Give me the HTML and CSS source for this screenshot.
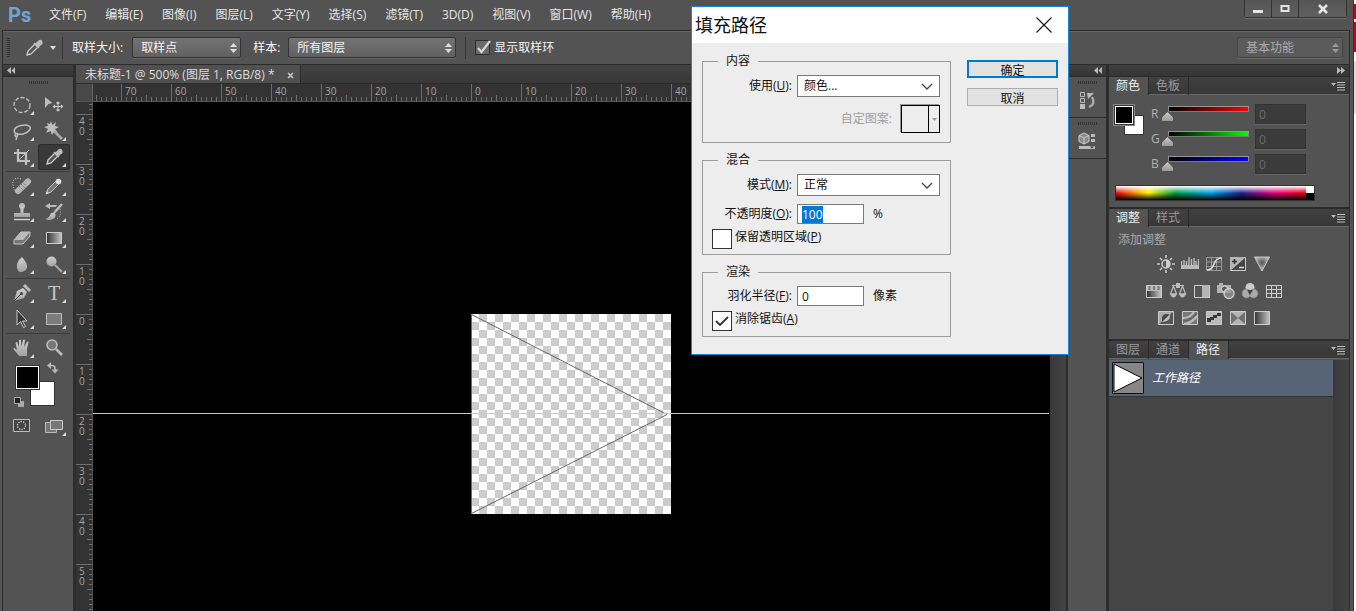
FILE: index.html
```html
<!DOCTYPE html>
<html lang="zh-CN">
<head>
<meta charset="utf-8">
<title>未标题-1</title>
<link rel="stylesheet" href="styles.css">
</head>
<body>
<svg class="defs" aria-hidden="true">
  <defs>
    <linearGradient id="metal" x1="0" y1="0" x2="0" y2="1"><stop offset="0" stop-color="#cfcfcf"/><stop offset="1" stop-color="#a2a2a2"/></linearGradient>
    <linearGradient id="fade" x1="0" y1="0" x2="1" y2="0"><stop offset="0" stop-color="#333"/><stop offset="1" stop-color="#c4c4c4"/></linearGradient>
    <radialGradient id="glow" cx=".5" cy=".4" r=".5"><stop offset="0" stop-color="#555"/><stop offset="1" stop-color="#bbb"/></radialGradient>
    <symbol id="updown" viewBox="0 0 7 10"><path d="M3.500 0L7 4H0zM0 6h7L3.500 10z" fill="currentColor"/></symbol>
    <symbol id="chevron" viewBox="0 0 12 7"><path d="M1 1l5 5 5-5" fill="none" stroke="#444" stroke-width="1.300"/></symbol>
    <symbol id="flyout" viewBox="0 0 14 9"><path d="M0 1h5L2.500 4z" fill="#bbb"/><path d="M6 .5h8M6 3h8M6 5.500h8M6 8h8" stroke="#bbb"/></symbol>
    <symbol id="dropper" viewBox="0 0 20 20"><path d="M3 17l1-4 7-7 3 3-7 7z" fill="#555" stroke="#ccc" stroke-width="1.300"/><path d="M10 5l5 5M11.500 6.500l3-3q2-2 3 0t-1 3l-2.500 2.500z" fill="#bbb" stroke="#bbb" stroke-width="1.600"/></symbol>
    <symbol id="left" viewBox="0 0 8 7"><path d="M4 0v7L0 3.500zM8 0v7L4.500 3.500z" fill="#bbb"/></symbol>
    <symbol id="right" viewBox="0 0 8 7"><path d="M0 0v7l4-3.500zM4 0v7l4-3.500z" fill="#bbb"/></symbol>
  </defs>
</svg>
<div class="desktop">
<main class="app">
  <header class="menubar">
    <span class="logo">Ps</span>
    <nav class="menus">
      <button>文件(F)</button><button>编辑(E)</button><button>图像(I)</button><button>图层(L)</button><button>文字(Y)</button><button>选择(S)</button><button>滤镜(T)</button><button>3D(D)</button><button>视图(V)</button><button>窗口(W)</button><button>帮助(H)</button>
    </nav>
    <div class="winctl">
      <button aria-label="最小化"><svg width="12" height="12"><path d="M1 7h10v3H1z" fill="#e4e4e4"/></svg></button>
      <button aria-label="最大化"><svg width="12" height="12"><path d="M2.500 3h7v5h-7z" fill="none" stroke="#e4e4e4" stroke-width="2"/></svg></button>
      <button class="wide" aria-label="关闭"><svg width="12" height="12"><path d="M2 2l8 8M10 2l-8 8" stroke="#e4e4e4" stroke-width="2.600"/></svg></button>
    </div>
  </header>

  <section class="options">
    <i class="grip-v"></i>
    <svg class="opt-tool" width="20" height="20"><use href="#dropper"/></svg>
    <svg class="opt-arrow" width="6" height="4"><path d="M0 0h6L3 4z" fill="#ddd"/></svg>
    <i class="rule"></i>
    <label for="size">取样大小:</label>
    <span class="pick pick-size"><select id="size"><option>取样点</option></select><svg width="7" height="10"><use href="#updown"/></svg></span>
    <label class="second" for="sample">样本:</label>
    <span class="pick pick-sample"><select id="sample"><option>所有图层</option></select><svg width="7" height="10"><use href="#updown"/></svg></span>
    <i class="rule"></i>
    <label class="ring"><span class="tick"><input type="checkbox" checked><svg width="16" height="16"><path d="M3 8l3.500 4L15 1" fill="none" stroke="#d8d8d8" stroke-width="2.200"/></svg></span>显示取样环</label>
    <span class="pick pick-space"><select aria-label="工作区"><option>基本功能</option></select><svg width="7" height="10"><use href="#updown"/></svg></span>
  </section>

  <div class="work">
    <aside class="tools">
      <div class="strip"><svg width="8" height="7"><use href="#left"/></svg></div>
      <i class="grip-h"></i>
      <div class="toolset">
        <button class="more" aria-label="椭圆选框"><svg viewBox="0 0 20 20"><ellipse cx="10" cy="10" rx="8" ry="7.500" fill="none" stroke="#c4c4c4" stroke-width="1.300" stroke-dasharray="4 1.800"/></svg></button>
        <button aria-label="移动"><svg viewBox="0 0 20 20"><path d="M1 2l7.500 6-4 1L1 13z" fill="#bdbdbd"/><path d="M14 7v9M9.500 11.500h9M12.500 8.500L14 7l1.500 1.500M12.500 14.500L14 16l1.500-1.500M11 10l-1.500 1.500L11 13M17 10l1.500 1.500L17 13" stroke="#c4c4c4" stroke-width="1.200" fill="none"/></svg></button>
        <button class="more" aria-label="套索"><svg viewBox="0 0 20 20"><path d="M5 13C0 11 2 6 9 4.500s11 1 8.500 4.500S9 14 5 13c-3-1-2 4 0 2s0-3-1-2M5 15l-1 4" fill="none" stroke="#c0c0c0" stroke-width="1.500"/></svg></button>
        <button class="more" aria-label="魔棒"><svg viewBox="0 0 20 20"><path d="M7 0l1.500 4L12 1l-1 4 4 1-4 2 3 4-4-1-2 3-1.500-4L2 12l2-4-4-2 4-1-1-3 3 1z" fill="#bdbdbd"/><path d="M10 10l8 8" stroke="#aaa" stroke-width="2.500"/></svg></button>
        <button class="more" aria-label="裁剪"><svg viewBox="0 0 20 20"><path d="M6 2v12h12M2 6h12v12" fill="none" stroke="#c0c0c0" stroke-width="2.200"/><path d="M6 14L17 3" stroke="#c0c0c0"/></svg></button>
        <button class="more on" aria-label="吸管"><svg viewBox="0 0 20 20"><use href="#dropper"/></svg></button>
      </div>
      <div class="toolset">
        <button class="more" aria-label="修复画笔"><svg viewBox="0 0 20 20"><path d="M9 3C3 1 0 4 1 9s2 6 4 8" fill="none" stroke="#ccc" stroke-dasharray="1 1.500"/><path d="M6 15L16 5.500" stroke="#b5b5b5" stroke-width="6" stroke-linecap="round"/><path d="M9 8l4 4M7 10l4 4M11 6.500l4 4" stroke="#555" stroke-dasharray="1 1.500"/></svg></button>
        <button class="more" aria-label="画笔"><svg viewBox="0 0 20 20"><path d="M2 18l2-5 8-8 3 3-8 8z" fill="#777" stroke="#c5c5c5"/><circle cx="14.500" cy="5.500" r="2.800" fill="#ddd"/><path d="M2 18l1-3 2 2z" fill="#ddd"/></svg></button>
        <button class="more" aria-label="图章"><svg viewBox="0 0 20 20"><circle cx="10" cy="4" r="3" fill="#bbb"/><path d="M8.500 5h3v6H18v4H2v-4h6.500z" fill="url(#metal)"/><path d="M2 17.500h16" stroke="#ccc" stroke-width="1.500"/></svg></button>
        <button class="more" aria-label="历史记录画笔"><svg viewBox="0 0 20 20"><path d="M6 1L1 4l5 3V5h6l1-2H6z" fill="#bbb"/><path d="M18 2l-8 9M9 12l2 2" stroke="#bbb" stroke-width="2.500"/><path d="M10 11q3 4-1 6T1 17q4-1 5-4t4-2z" fill="url(#metal)"/><path d="M16 7q2 6-3 10" fill="none" stroke="#ccc" stroke-dasharray="1 1.500"/></svg></button>
        <button class="more" aria-label="橡皮擦"><svg viewBox="0 0 20 20"><path d="M2 12L9 4h9v4l-7 8H2z" fill="#777" stroke="#c4c4c4"/><path d="M2 12L9 4h9l-7 8z" fill="#bbb"/></svg></button>
        <button class="more" aria-label="渐变"><svg viewBox="0 0 20 20"><path d="M2.500 4.500h15v11h-15z" fill="url(#fade)" stroke="#ccc"/></svg></button>
        <button class="more" aria-label="模糊"><svg viewBox="0 0 20 20"><path d="M10 3q6 7 5 10.500T10 18t-5-4.500T10 3z" fill="url(#metal)"/></svg></button>
        <button class="more" aria-label="减淡"><svg viewBox="0 0 20 20"><circle cx="7.500" cy="7.500" r="5" fill="url(#metal)"/><path d="M11 11l7 7" stroke="#aaa" stroke-width="2"/></svg></button>
      </div>
      <div class="toolset">
        <button class="more" aria-label="钢笔"><svg viewBox="0 0 20 20"><path d="M2 18l3-10 6-3 4 4-3 6z" fill="url(#metal)"/><path d="M2 18l7-7" stroke="#444"/><circle cx="9.500" cy="10.500" r="1.500" fill="#444"/><path d="M12 2l6 6" stroke="#bbb" stroke-width="3"/></svg></button>
        <button class="more tool-type" aria-label="文字">T</button>
        <button class="more" aria-label="路径选择"><svg viewBox="0 0 20 20"><path d="M5 1v15l3.500-3.500 3 6 2-1-3-5.500H15z" fill="#383838" stroke="#c8c8c8"/></svg></button>
        <button class="more" aria-label="矩形"><svg viewBox="0 0 20 20"><path d="M2.500 4.500h15v11h-15z" fill="#7d7d7d" stroke="#bbb"/></svg></button>
      </div>
      <div class="toolset last">
        <button class="more" aria-label="抓手"><svg viewBox="0 0 20 20"><path d="M7 18q-2-3-5-6-1-2 0-2t3 2L3.500 5q1.500-2 2 0L7 9V2.500q1.500-2 2 0l.5 6L11 2q1.500-1 2 .5L12 9l3-5q1.500-1 1.500.5L15 11v7z" fill="url(#metal)"/></svg></button>
        <button aria-label="缩放"><svg viewBox="0 0 20 20"><circle cx="8" cy="7" r="5" fill="#777" stroke="#bbb" stroke-width="1.600"/><path d="M12 11l6 6" stroke="#bbb" stroke-width="2.600"/></svg></button>
      </div>
      <div class="colors">
        <i class="back"></i><i class="front"></i>
        <svg class="swap" width="12" height="12"><path d="M2 3.500h3q3 0 3 3v3" fill="none" stroke="#bbb" stroke-width="1.500"/><path d="M4 0v7L0 3.500zM4.500 7.500h7L8 11.500z" fill="#bbb"/></svg>
        <svg class="reset" width="10" height="10"><path d="M4 4h6v6H4z" fill="#aaa"/><path d="M.5 .5h6v6h-6z" fill="#222" stroke="#aaa"/></svg>
      </div>
      <div class="modes">
        <button aria-label="快速蒙版"><svg viewBox="0 0 20 20"><path d="M1.500 3.500h16v12h-16z" fill="#444" stroke="#bbb"/><circle cx="9.500" cy="9.500" r="4" fill="none" stroke="#ddd" stroke-width="1.300" stroke-dasharray="1.200 1.300"/></svg></button>
        <button class="more" aria-label="屏幕模式"><svg viewBox="0 0 20 20"><path d="M1.500 6.500h11v10h-11z" fill="#777" stroke="#bbb"/><path d="M6.500 4.500h12v9h-12z" fill="#777" stroke="#ccc"/></svg></button>
      </div>
    </aside>

    <section class="doc">
      <div class="tabs"><div class="tab">未标题-1 @ 500% (图层 1, RGB/8) *<button aria-label="关闭文档"><svg width="7" height="7"><path d="M1 1l5 5M6 1L1 6" stroke="#ccc" stroke-width="1.500"/></svg></button></div></div>
      <div class="top"><div class="corner"></div><div class="ruler-h"><span class="cut"></span><span>70</span><span>60</span><span>50</span><span>40</span><span>30</span><span>20</span><span>10</span><span>0</span><span>10</span><span>20</span><span>30</span><span>40</span><span>50</span><span>60</span><span>70</span><span>80</span><span>90</span><span>100</span><span>110</span></div></div>
      <div class="stage">
        <div class="ruler-v"><span class="cut"></span><span>40</span><span>30</span><span>20</span><span>10</span><span>0</span><span>10</span><span>20</span><span>30</span><span>40</span><span>50</span></div>
        <div class="canvas">
          <div class="art"><svg viewBox="0 0 200 200"><path d="M.5 .5V199.500L196 100.500 .5 .5" fill="none" stroke="#666"/></svg></div>
          <i class="guide"></i>
        </div>
        <div class="vscroll"></div>
      </div>
    </section>

    <aside class="dock">
      <div class="strip end"><svg width="8" height="7"><use href="#left"/></svg></div>
      <div class="dock-item"><i class="grip-h"></i><button aria-label="历史记录"><svg width="18" height="18"><path d="M2.500 1.500h4v4h-4zM2.500 7.500h4v4h-4z" fill="none" stroke="#bbb"/><path d="M2 13h5v5H2z" fill="#bbb"/><path d="M11 16q7-3 3-10" fill="none" stroke="#aaa" stroke-width="2.400"/><path d="M9 2h7l-6 6z" fill="#bbb"/></svg></button></div>
      <div class="dock-item"><i class="grip-h"></i><button aria-label="属性"><svg width="18" height="18"><path d="M6 1l5 2.500v6L6 12 1 9.500v-6z" fill="#888" stroke="#ccc"/><path d="M1 3.500L6 6l5-2.500M6 6v6" fill="none" stroke="#ccc"/><path d="M13 2h4v3h-4zM13 7h4v3h-4zM1 14h16v3H1z" fill="#bbb"/><path d="M12 14.500h4l-2 2z" fill="#333"/></svg></button></div>
    </aside>

    <aside class="panels">
      <div class="strip end"><svg width="8" height="7"><use href="#right"/></svg></div>
      <section class="panel color-panel">
        <div class="ptabs"><button class="on">颜色</button><button>色板</button><svg width="14" height="9"><use href="#flyout"/></svg></div>
        <div class="mixer">
          <div class="pair"><i class="back"></i><i class="front"></i></div>
          <div class="channels">
            <label for="r">R</label><input class="red" type="range" min="0" max="255" value="0" aria-label="R"><input id="r" type="text" value="0">
            <label for="g">G</label><input class="green" type="range" min="0" max="255" value="0" aria-label="G"><input id="g" type="text" value="0">
            <label for="b">B</label><input class="blue" type="range" min="0" max="255" value="0" aria-label="B"><input id="b" type="text" value="0">
          </div>
        </div>
        <div class="spectrum"><i class="hues"></i><i class="bw"></i></div>
      </section>
      <section class="panel adjust-panel">
        <div class="ptabs"><button class="on">调整</button><button>样式</button><svg width="14" height="9"><use href="#flyout"/></svg></div>
        <p>添加调整</p>
        <div class="adj">
          <button aria-label="亮度"><svg width="18" height="18"><circle cx="9" cy="9" r="4" fill="#555" stroke="#ccc" stroke-width="1.500"/><path d="M9 5a4 4 0 010 8z" fill="#ccc"/><path d="M9 0v3M9 15v3M0 9h3M15 9h3M3 3l2 2M13 13l2 2M15 3l-2 2M5 13l-2 2" stroke="#c4c4c4" stroke-width="1.700"/></svg></button>
          <button aria-label="色阶"><svg width="18" height="18"><path d="M0 10h18v4H0z" fill="#bbb"/><path d="M.5 10V6M3 10V5M5.500 10V6M8 10V2M10.500 10V4M13 10V3M15 10V6M17.500 10V4" stroke="#bbb" stroke-width="1.400"/></svg></button>
          <button aria-label="曲线"><svg width="18" height="18"><path d="M1.500 2.500h15v13h-15zM6.500 2v14M11.500 2v14M1 7h16M1 11.500h16" fill="none" stroke="#999"/><path d="M2 15q5 0 7-6t8-6" fill="none" stroke="#ddd" stroke-width="1.600"/></svg></button>
          <button aria-label="曝光度"><svg width="18" height="18"><path d="M1.500 2.500h15v13h-15z" fill="#444" stroke="#ccc"/><path d="M1 16V2h16z" fill="#b4b4b4"/><path d="M5.500 4v5M3 6.500h5" stroke="#333" stroke-width="1.500"/><path d="M10 12.500h5" stroke="#ddd" stroke-width="1.500"/></svg></button>
          <button aria-label="自然饱和度"><svg width="18" height="18"><path d="M1.500 2h15L9 16z" fill="url(#glow)" stroke="#c4c4c4"/></svg></button>
        </div>
        <div class="adj">
          <button aria-label="色相饱和度"><svg width="18" height="18"><path d="M1.500 3.500h15v12h-15z" fill="#bbb" stroke="#ccc"/><path d="M4.500 4v4M9 4v4M13.500 4v4" stroke="#777" stroke-width="2"/><path d="M2 9h14v6H2z" fill="url(#fade)"/></svg></button>
          <button aria-label="色彩平衡"><svg width="18" height="18"><path d="M9 1v5M3 3.500h12M4.500 4L1.500 12h6zM13.500 4l-3 8h6z" fill="none" stroke="#bbb" stroke-width="1.200"/><path d="M7 1h4v5H7z" fill="#bbb"/><path d="M1 11.500h7q-1 4-3.500 4T1 11.500zM10 11.500h7q-1 4-3.500 4T10 11.500z" fill="#bbb"/></svg></button>
          <button aria-label="黑白"><svg width="18" height="18"><path d="M1.500 3.500h15v12h-15z" fill="#555" stroke="#ccc"/><path d="M9 3h7v12H9z" fill="#b4b4b4"/></svg></button>
          <button aria-label="照片滤镜"><svg width="18" height="18"><path d="M0 3h2V1h4v2h8v8H0z" fill="#b0b0b0"/><circle cx="7.500" cy="7" r="3" fill="#555" stroke="#ddd"/><circle cx="12" cy="11.500" r="5" fill="#999" fill-opacity=".7" stroke="#ccc" stroke-width="1.400"/></svg></button>
          <button aria-label="通道混合器"><svg width="18" height="18"><circle cx="9" cy="5.500" r="4.500" fill="#ccc"/><circle cx="5.500" cy="11.500" r="4.500" fill="#aaa" stroke="#777" stroke-width=".5"/><circle cx="12.500" cy="11.500" r="4.500" fill="#aaa" stroke="#777" stroke-width=".5"/><path d="M9 13L6 8h6z" fill="#444"/></svg></button>
          <button aria-label="颜色查找"><svg width="18" height="18"><path d="M1 3h16v13H1z" fill="#555"/><path d="M1.500 3.500h15v12h-15zM6.500 3v13M11.500 3v13M1 7.500h16M1 11.500h16" fill="none" stroke="#ccc"/></svg></button>
        </div>
        <div class="adj">
          <button aria-label="反相"><svg width="18" height="18"><path d="M1.500 2.500h15v13h-15z" fill="#555" stroke="#ccc"/><path d="M2 15L16 3H2z" fill="#aaa"/><path d="M5 12q-1-6 4-7 5 0 4 3-1 5-8 4z" fill="#444"/><path d="M5 13l8-8q1 8-8 8z" fill="#bbb"/></svg></button>
          <button aria-label="色调分离"><svg width="18" height="18"><path d="M1.500 2.500h15v13h-15z" fill="#777" stroke="#ccc"/><path d="M2 9q7 0 11-6M3 15q8-1 13-8" fill="none" stroke="#bbb" stroke-width="2.200"/><path d="M2 12q8 0 14-8" fill="none" stroke="#666" stroke-width="1.500"/></svg></button>
          <button aria-label="阈值"><svg width="18" height="18"><path d="M1.500 2.500h15v13h-15z" fill="#bbb" stroke="#ccc"/><path d="M2 12V9h3V8h3V6h4V4h4v3h-4v2H9v2H6v2H2z" fill="#383838"/></svg></button>
          <button aria-label="可选颜色"><svg width="18" height="18"><path d="M1.500 2.500h15v13h-15z" fill="#b4b4b4" stroke="#ccc"/><path d="M2 3l7 6-7 6z" fill="#707070"/><path d="M16 3L9 9l7 6z" fill="#707070"/></svg></button>
          <button aria-label="渐变映射"><svg width="18" height="18"><path d="M1.500 2.500h15v13h-15z" fill="url(#fade)" stroke="#ccc"/></svg></button>
        </div>
      </section>
      <section class="panel path-panel">
        <div class="ptabs"><button>图层</button><button>通道</button><button class="on">路径</button><svg width="14" height="9"><use href="#flyout"/></svg></div>
        <div class="paths">
          <div class="list"><button class="path"><svg width="32" height="32"><path d="M.5 .5h31v31H.5z" fill="#868686" stroke="#111"/><path d="M2 2l28 14L2 30z" fill="#fff" stroke="#000"/></svg>工作路径</button></div>
          <div class="pscroll"></div>
        </div>
      </section>
    </aside>
  </div>
</main>
<div class="behind"></div>
</div>

<form class="dialog" role="dialog" aria-labelledby="dlg-title">
  <div class="dlg-head"><h1 id="dlg-title">填充路径</h1><button type="button" aria-label="关闭"><svg width="16" height="16"><path d="M.5 .5l15 15M15.500 .5l-15 15" stroke="#111" stroke-width="1.100"/></svg></button></div>
  <div class="dlg-body">
    <div class="groups">
      <fieldset>
        <legend>内容</legend>
        <div class="row"><label for="use">使用(<u>U</u>):</label><span class="combo"><select id="use"><option>颜色...</option></select><svg width="12" height="7"><use href="#chevron"/></svg></span></div>
        <div class="row row-pattern"><span>自定图案:</span><button type="button" class="pattern" aria-label="自定图案" disabled><i></i><svg width="5" height="3"><path d="M0 0h5L2.500 3z" fill="#999"/></svg></button></div>
      </fieldset>
      <fieldset>
        <legend>混合</legend>
        <div class="row"><label for="mode">模式(<u>M</u>):</label><span class="combo"><select id="mode"><option>正常</option></select><svg width="12" height="7"><use href="#chevron"/></svg></span></div>
        <div class="row"><label for="opacity">不透明度(<u>O</u>):</label><input id="opacity" type="text" value="100"><span>%</span></div>
        <label class="check"><span class="box"><input type="checkbox"></span><span>保留透明区域(<u>P</u>)</span></label>
      </fieldset>
      <fieldset>
        <legend>渲染</legend>
        <div class="row"><label for="feather">羽化半径(<u>F</u>):</label><input id="feather" type="text" value="0"><span>像素</span></div>
        <label class="check"><span class="box"><input type="checkbox" checked><svg width="14" height="10"><path d="M1 5l4 4 8-8" fill="none" stroke="#333" stroke-width="1.800"/></svg></span><span>消除锯齿(<u>A</u>)</span></label>
      </fieldset>
    </div>
    <div class="actions"><button type="button" class="primary">确定</button><button type="button">取消</button></div>
  </div>
</form>
<script src="script.js"></script>
</body>
</html>
```
FILE: styles.css
```css
* { box-sizing: border-box; }
html, body { height: 100%; }
body {
  margin: 0;
  overflow: hidden;
  background: #535353;
  color: #e6e6e6;
  font: 12px/16px "Open Sans", "Noto Sans CJK SC", sans-serif;
}
button, input, select { font: inherit; color: inherit; margin: 0; padding: 0; border: 0; background: none; outline: none; }
button { display: flex; align-items: center; justify-content: center; }
select, input[type="checkbox"], input[type="range"] { appearance: none; }
svg { display: block; flex: none; }
i { display: block; flex: none; }
.defs { position: absolute; width: 0; height: 0; }

.desktop { display: flex; height: 100vh; }
.app { flex: 1; min-width: 0; display: flex; flex-direction: column; padding: 0 3px 0 2px; border-right: 1px solid #333; }
.behind { width: 2px; background: linear-gradient(#fff 4px, #c8001c 4px 19px, #fff 19px 22px, #c8001c 22px 52px, #fff 52px 61px, #ddd 61px 114px, #fff 114px); }

/* menu bar */
.menubar { display: flex; height: 30px; align-items: center; }
.logo { width: 38px; padding-left: 6px; color: #6fa5d8; font: 700 20px/26px Roboto, sans-serif; }
.menus { display: flex; gap: 19px; padding-left: 9px; }
.winctl { display: flex; align-self: flex-start; margin-left: auto; margin-right: 3px; border: 1px solid #333; border-top: 0; border-radius: 0 0 3px 3px; box-shadow: 0 1px #6b6b6b; }
.winctl button { width: 27px; height: 17px; background: linear-gradient(#555, #606060); border-right: 1px solid #333; }
.winctl .wide { width: 47px; border: 0; }

/* options bar */
.options { display: flex; align-items: center; height: 35px; border: 1px solid #2b2b2b; box-shadow: inset 0 1px #666; padding: 0 6px 0 4px; color: #f4f4f4; }
.grip-v { width: 3px; height: 20px; background: repeating-linear-gradient(#333 0 1px, transparent 1px 2px); }
.opt-tool { margin-left: 14px; }
.opt-arrow { margin-left: 6px; }
.rule { width: 1px; height: 22px; background: #383838; margin: 0 9px 0 6px; }
.pick { display: grid; align-items: center; height: 21px; }
.pick > * { grid-area: 1 / 1; }
.pick select { width: 100%; height: 21px; padding-left: 8px; border: 1px solid #333; border-radius: 2px; background: linear-gradient(#737373, #616161); box-shadow: 0 1px #666; }
.pick svg { justify-self: end; margin-right: 4px; pointer-events: none; color: #ddd; }
.pick-size { width: 109px; margin-left: 9px; }
.second { margin-left: 12px; }
.pick-sample { width: 168px; margin: 0 3px 0 8px; }
.ring { display: flex; align-items: center; gap: 3px; }
.tick { display: grid; }
.tick > * { grid-area: 1 / 1; }
.tick input { width: 15px; height: 15px; border: 1px solid #2e2e2e; background: #6a6a6a; }
.tick svg { pointer-events: none; }
.pick-space { width: 106px; margin-left: auto; color: #aaa; }
.pick-space select { background: #5b5b5b; border-color: #464646; }
.pick-space svg { color: #999; }

/* workspace */
.work { flex: 1; min-height: 0; display: flex; }
.strip { display: flex; align-items: center; height: 12px; padding: 0 4px; background: linear-gradient(#414141, #343434); border-bottom: 1px solid #2b2b2b; }
.end { justify-content: flex-end; }
.grip-h { width: 19px; height: 3px; margin: 4px auto 0; background: repeating-linear-gradient(90deg, #333 0 1px, transparent 1px 2px); }

.tools { width: 74px; border: solid #2d2d2d; border-width: 0 3px 0 1px; }
.tools > .grip-h { margin-bottom: 8px; }
.toolset, .modes { display: grid; grid-template-columns: 1fr 1fr; margin: 0 3px 1px; padding-bottom: 1px; }
.toolset { border-bottom: 1px solid #3c3c3c; }
.toolset.last { border: 0; margin-bottom: 0; padding: 0; }
.toolset button, .modes button { position: relative; height: 26px; border-radius: 3px; }
.toolset svg, .modes svg { width: 20px; height: 20px; }
.toolset .on { background: #393939; box-shadow: inset 0 0 0 1px #2d2d2d; }
.more::after { content: ""; position: absolute; right: 4px; bottom: 3px; width: 4px; height: 4px; background: #ddd; clip-path: polygon(100% 0, 100% 100%, 0 100%); }
.toolset .tool-type { font: 20px/24px "Liberation Serif", serif; color: #c8c8c8; }
.colors { position: relative; height: 52px; }
.colors i { position: absolute; width: 25px; height: 25px; border: 1px solid #333; }
.colors .front { left: 12px; top: 4px; background: #000; box-shadow: inset 0 0 0 1px #fff; }
.colors .back { left: 27px; top: 20px; background: #fff; }
.colors svg { position: absolute; }
.colors .swap { left: 44px; top: 1px; }
.colors .reset { left: 11px; top: 36px; }

/* document */
.doc { flex: 1; min-width: 0; display: flex; flex-direction: column; border-right: 2px solid #2d2d2d; }
.tabs { display: flex; height: 19px; background: linear-gradient(#414141, #383838); border-bottom: 1px solid #2b2b2b; }
.tab { display: flex; align-items: center; gap: 12px; padding: 2px 6px 0 9px; background: #505050; border-right: 1px solid #2b2b2b; color: #ddd; white-space: nowrap; }
.top { display: flex; height: 18px; background: #333; border-bottom: 1px solid #555; }
.corner { width: 17px; background: #484848; border-right: 1px solid #666; }
.ruler-h { flex: 1; min-width: 0; display: flex; overflow: hidden; }
.ruler-h span {
  flex: 0 0 50px; height: 17px; padding-left: 3px; border-left: 1px solid #6d6d6d; color: #a5a5a5; font-size: 10px; line-height: 14px;
  background: linear-gradient(#6d6d6d, #6d6d6d) 24px 100% / 1px 6px no-repeat, repeating-linear-gradient(90deg, transparent 0 4px, #6d6d6d 4px 5px) 0 100% / 100% 4px no-repeat;
}
.ruler-h .cut { margin-left: -22px; }
.stage { flex: 1; min-height: 0; display: flex; }
.ruler-v { width: 17px; overflow: hidden; display: flex; flex-direction: column; background: #333; border-right: 1px solid #555; }
.ruler-v span {
  flex: 0 0 50px; padding: 1px 10px 0 3px; border-top: 1px solid #6d6d6d; color: #a5a5a5; font-size: 10px; line-height: 10px; word-break: break-all;
  background: linear-gradient(#6d6d6d, #6d6d6d) 100% 24px / 5px 1px no-repeat, repeating-linear-gradient(transparent 0 4px, #6d6d6d 4px 5px) 100% 0 / 3px 100% no-repeat;
}
.ruler-v .cut { margin-top: -38px; }
.canvas { position: relative; flex: 1; background: #000; overflow: hidden; }
.art { position: absolute; left: 378px; top: 212px; width: 200px; height: 200px; background: repeating-conic-gradient(#ccc 0 25%, #fff 0 50%) 0 0 / 16px 16px; }
.guide { position: absolute; left: 0; right: 1px; top: 311px; height: 1px; background: #4ff; }
.vscroll, .pscroll { width: 16px; background: linear-gradient(90deg, #393939, #434343); }

/* icon dock */
.dock { width: 40px; border-right: 2px solid #2d2d2d; }
.dock-item { display: flow-root; height: 41px; border-bottom: 1px solid #2d2d2d; }
.dock-item button { width: 38px; height: 28px; margin-top: 2px; }

/* panels */
.panels { width: 242px; display: flex; flex-direction: column; border: solid #2d2d2d; border-width: 0 1px; }
.panel { border-bottom: 2px solid #2b2b2b; background: #535353; }
.ptabs { display: flex; height: 18px; background: linear-gradient(#404040, #383838); border-bottom: 1px solid #666; color: #999; }
.ptabs button { height: 18px; padding: 0 8px 0 7px; border-right: 1px solid #2b2b2b; }
.ptabs .on { background: #535353; color: #eee; }
.ptabs svg { margin: 5px 4px 0 auto; }
.color-panel, .adjust-panel { height: 132px; }
.mixer { display: flex; padding: 9px 0 0 5px; }
.pair { position: relative; width: 37px; height: 34px; margin-top: 1px; }
.pair i { position: absolute; width: 20px; height: 20px; border: 1px solid #333; }
.pair .front { left: 0; top: 0; background: #000; box-shadow: inset 0 0 0 1px #fff, 0 0 0 1px #888; }
.pair .back { right: 7px; bottom: 4px; background: #fff; }
.channels { display: grid; grid-template-columns: 11px 93px 51px; grid-auto-rows: 20px; align-items: center; row-gap: 5px; color: #b0b0b0; }
.channels label { line-height: 20px; }
.channels input[type="text"] { height: 20px; width: 51px; padding-left: 3px; border: 1px solid #333; background: #3b3b3b; box-shadow: 0 1px #666; color: #6a6a6a; }
.channels input[type="range"] { width: 92px; height: 14px; }
.channels input::-webkit-slider-runnable-track { height: 16px; background: linear-gradient(90deg, #000, var(--hue)) 7px 1px / 79px 4px no-repeat, linear-gradient(#999, #777) 6px 0 / 81px 6px no-repeat; }
.channels input::-webkit-slider-thumb { appearance: none; width: 11px; height: 9px; margin-top: 6px; background: linear-gradient(#ccc, #999); clip-path: polygon(50% 0, 100% 60%, 100% 100%, 0 100%, 0 60%); }
.red { --hue: #f00; }
.green { --hue: #0f0; }
.blue { --hue: #00f; }
.spectrum { display: flex; width: 200px; height: 16px; margin: 11px 0 0 6px; border: 1px solid #333; }
.hues { flex: 1; background: linear-gradient(#fff, transparent 50%, #000), linear-gradient(90deg, #e60012, #fff000 17%, #009944 31%, #00a0e9 50%, #1d2088 66%, #e4007f 83%, #e60012); }
.bw { width: 8px; background: linear-gradient(#fff 50%, #000 50%); }
.adjust-panel p { margin: 5px 9px 6px; color: #a8a8a8; }
.adj { display: flex; justify-content: center; margin-right: 31px; height: 27px; }
.adj button { width: 24px; height: 20px; }
.path-panel { flex: 1; display: flex; flex-direction: column; border: 0; }
.paths { flex: 1; display: flex; padding-top: 1px; }
.list { flex: 1; background: #454545; }
.path { width: 100%; height: 37px; justify-content: flex-start; gap: 8px; padding-left: 3px; background: #576475; border-bottom: 1px solid #333; color: #fff; font-style: italic; }

/* dialog */
.dialog { position: absolute; left: 691px; top: 6px; width: 378px; border: 1px solid #1883d7; background: #ededed; color: #111; }
.dlg-head { display: flex; align-items: center; justify-content: space-between; height: 36px; padding: 0 16px 0 3px; background: #fff; }
.dlg-head h1 { margin: 0; font-size: 18px; line-height: 24px; font-weight: 400; }
.dlg-body { display: flex; gap: 16px; padding: 10px 10px 17px; }
.groups { flex: 1; display: grid; gap: 9px; }
fieldset { min-width: 0; margin: 0; padding: 6px 10px 5px 8px; border: 1px solid #9d9d9d; }
legend { margin-left: 7px; padding: 0 8px; line-height: 16px; }
.row { display: flex; align-items: center; gap: 5px; margin-bottom: 8px; }
.row label { width: 81px; text-align: right; white-space: nowrap; }
.row > span:last-child:not(.combo) { margin-left: 4px; }
.row:has(+ .check) { margin-bottom: 5px; }
.combo { flex: 1; display: grid; align-items: center; }
.combo > * { grid-area: 1 / 1; }
.combo select { width: 100%; height: 22px; padding-left: 6px; border: 1px solid #7a7a7a; background: #fff; }
.combo svg { justify-self: end; margin-right: 7px; pointer-events: none; }
.row input { width: 67px; height: 20px; padding-left: 4px; border: 1px solid #7a7a7a; background: #fff; }
.row input::selection { background: #0078d7; color: #fff; }
.row-pattern { justify-content: flex-end; gap: 9px; margin-bottom: 4px; color: #a0a0a0; }
.pattern { width: 39px; height: 28px; border: 1px solid #000; box-shadow: -1px -1px #999; justify-content: space-between; padding-right: 2px; }
.pattern i { width: 27px; height: 26px; border-right: 1px solid #000; }
.check { display: flex; align-items: flex-start; gap: 3px; }
.box { display: grid; place-items: center; width: 20px; height: 20px; margin-left: 1px; }
.box > * { grid-area: 1 / 1; }
.box input { width: 20px; height: 20px; border: 1px solid #333; background: #fff; }
.box svg { pointer-events: none; }
.actions { width: 91px; padding-top: 7px; display: grid; gap: 10px; align-content: start; }
.actions button { height: 18px; padding-top: 3px; border: 1px solid #adadad; background: #e1e1e1; }
.actions .primary { border: 2px solid #0078d7; }
```
FILE: script.js
```js
const opacity = document.getElementById("opacity");
opacity.focus();
opacity.select();
```
